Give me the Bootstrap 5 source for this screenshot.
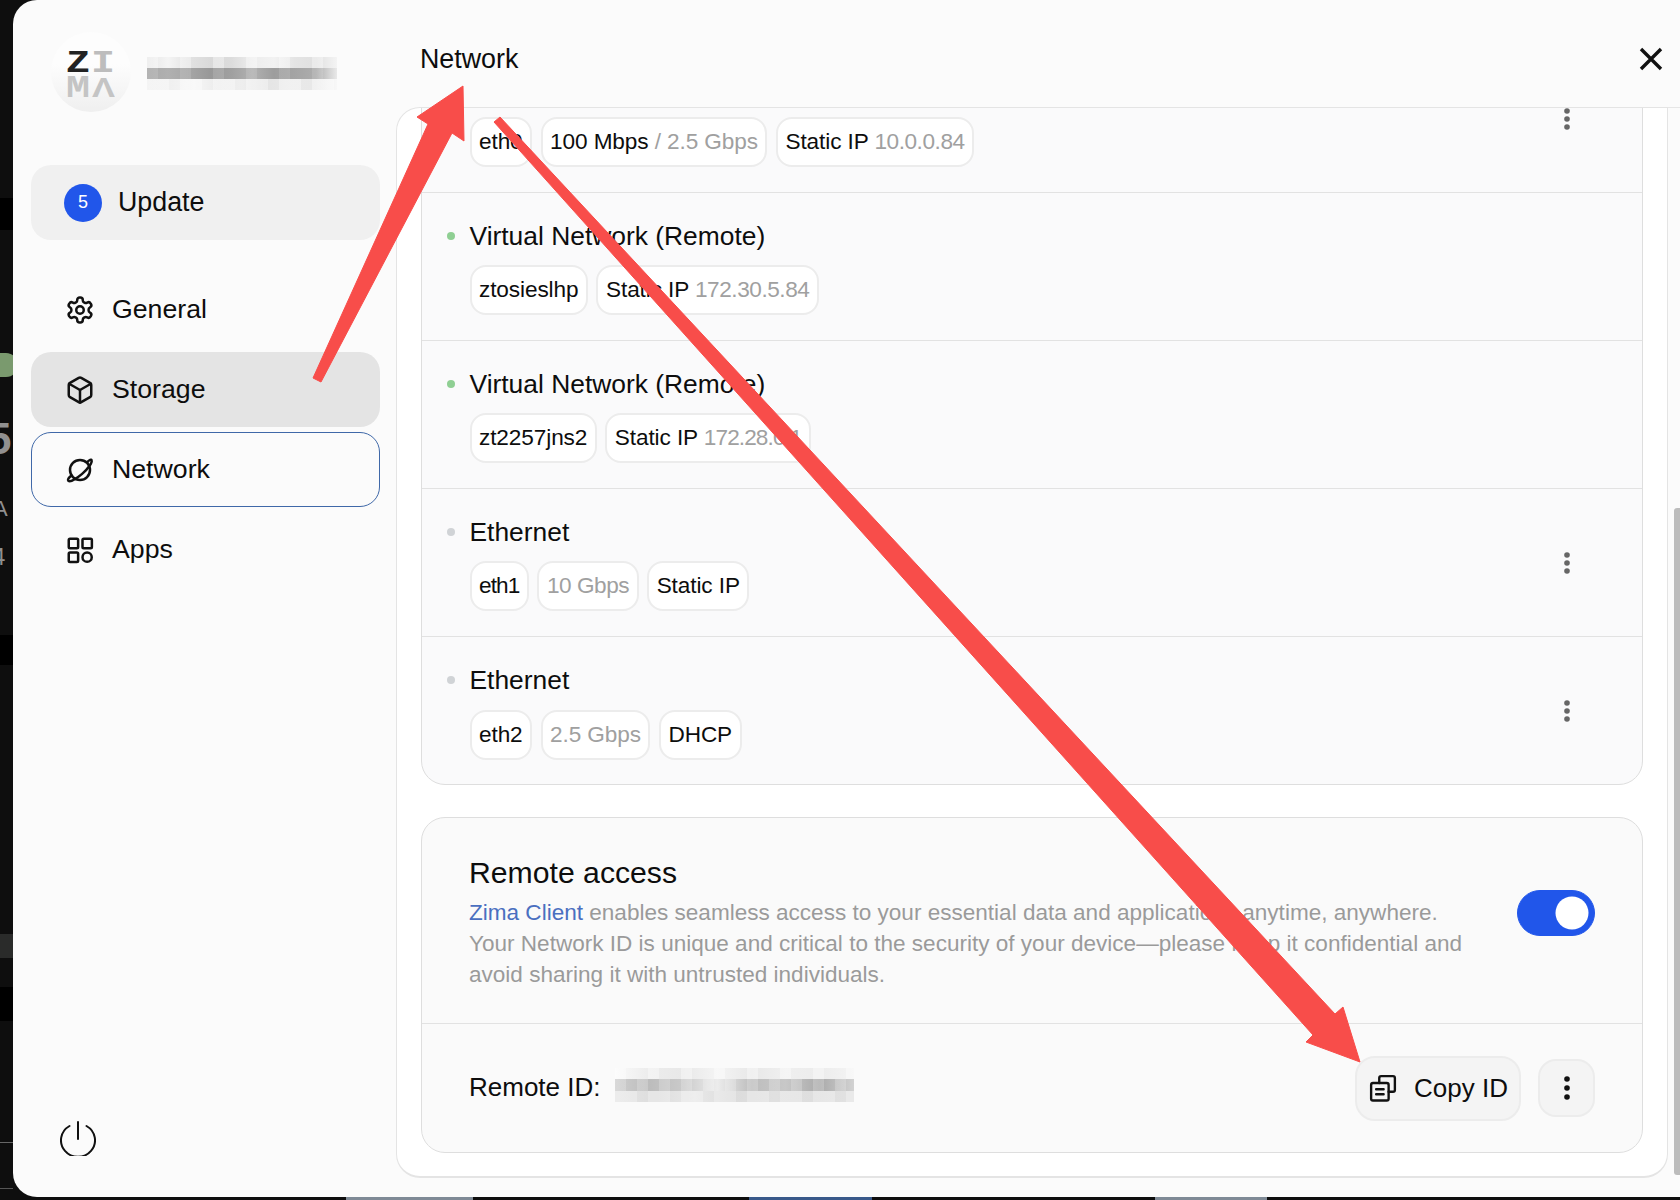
<!doctype html>
<html lang="en">
<head>
<meta charset="utf-8">
<title>Network</title>
<link href="https://cdn.jsdelivr.net/npm/bootstrap@5.3.0/dist/css/bootstrap.min.css" rel="stylesheet">
<style>
html,body{height:100%;margin:0;background:#0e0e0e;overflow:hidden}
body{font-family:"Liberation Sans",Arial,sans-serif;color:#0d0d0d}
.desk{position:relative;width:1680px;height:1200px;overflow:hidden}
.bg-item{position:absolute;display:block}
.band1{left:0;top:198px;width:13px;height:32px;background:#000}
.band2{left:0;top:635px;width:13px;height:30px;background:#000}
.band3{left:0;top:934px;width:13px;height:24px;background:#2a2b2a}
.band4{left:0;top:987px;width:13px;height:34px;background:#000}
.band5{left:0;top:1142px;width:13px;height:1px;background:#666}
.band6{left:0;top:1188px;width:13px;height:1px;background:#555}
.blob{left:-20px;top:353px;width:38px;height:24px;border-radius:12px;background:#7a9a6e}
.ghost{color:#909090;line-height:1;font-weight:700}
.g5{left:-13px;top:417px;font-size:44px}
.gA{left:-7px;top:498px;font-size:22px;font-weight:400}
.g4{left:-8px;top:545px;font-size:24px;font-weight:400}
.strip{top:1197px;height:3px;background:#7f8a96}
.s1{left:346px;width:127px}.s2{left:749px;width:123px;background:#39598a}.s3{left:1155px;width:112px}

.shell{position:relative;margin-left:13px;width:1667px;height:1197px;background:#fbfbfb;border-radius:24px 0 0 24px;overflow:hidden}
.side{width:383px;flex:none;padding:32px 16px 41px 18px}
.logo-disc{width:80px;height:80px;border-radius:50%;margin-left:20px;background:linear-gradient(180deg,#fdfdfd 40%,#efefef 100%)}
.fuzz{width:190px;margin-left:16px;margin-top:2px}
.fuzz i{display:block;height:11px}
.fuzz-a{background:repeating-linear-gradient(90deg,rgba(255,255,255,.35) 0 11px,transparent 11px 33px),linear-gradient(90deg,#e6e6e6,#f4f4f4,#e2e2e2,#d9d9d9,#dcdcdc,#ededed,#f2f2f2,#e4e4e4,#e0e0e0,#f4f4f4)}
.fuzz-b{background:repeating-linear-gradient(90deg,rgba(255,255,255,.12) 0 11px,transparent 11px 33px),linear-gradient(90deg,#a9a9a9,#b0b0b0,#a6a6a6,#989898,#a0a0a0,#b1b1b1,#9d9d9d,#a4a4a4,#adadad,#e9e9e9)}
.fuzz-c{background:repeating-linear-gradient(90deg,rgba(255,255,255,.35) 0 22px,transparent 22px 33px),linear-gradient(90deg,#eeeeee,#f0f0f0,#f6f6f6,#ebebeb,#eeeeee,#e4e4e4,#e9e9e9,#e8e8e8,#f8f8f8)}
.update-btn{height:75px;margin-top:53px;margin-bottom:32px;border-radius:20px;background:#f0f0f0;padding-left:33px;gap:16px;font-size:26.8px}
.count-dot{width:38px;height:38px;border-radius:50%;background:#2156ea;color:#fff;font-size:18px}
.nav-stack{gap:5px}
.nav-entry{height:75px;padding:0 0 0 33px;gap:17px;border-radius:20px;font-size:26.7px;color:#0d0d0d;border:1px solid transparent}
.nav-entry:hover,.nav-entry:focus{color:#0d0d0d}
.nav-entry.is-hover{background:#e4e4e4}
.nav-entry.is-focus{border:1.5px solid #3f68a8}
.power-btn{margin-left:29px;margin-top:auto;line-height:0}

.main-col{min-width:0}
.top-bar{height:107px;flex:none;padding:11px 17px 0 24px}
.page-title{font-size:26.8px;font-weight:400;margin:0}
.scroller{min-height:0;overflow:hidden;padding-bottom:19px;background:linear-gradient(#e6e6e6,#e6e6e6) right top/12px 1px no-repeat}
.panel{height:100%;margin-right:12px;background:#fff;border:solid #e4e4e4;border-width:1px 1px 2px 1px;border-radius:24px 0 24px 24px;padding:0 24px 24px;overflow:hidden}
.net-card{margin-top:-64px;margin-bottom:32px;background:#fafafb;border:1px solid #dedede;border-radius:24px;--bs-list-group-bg:transparent;--bs-list-group-border-color:#e2e2e2;--bs-border-radius:24px;--bs-list-group-border-radius:24px}
.net-row{height:148px;padding:23px 72px 0 24.5px;background:transparent;border-width:0 0 1px;border-style:solid;border-color:#e2e2e2;color:#0d0d0d}
.net-row:last-child{border-width:0;height:147px}
.net-name{font-size:26.4px;line-height:40px;gap:15px;margin-bottom:9px}
.net-row:last-child .net-name{margin-bottom:10px}
.kebab-soft{margin-top:-23px}
.dot-on,.dot-off{width:8px;height:8px;border-radius:50%;flex:none}
.dot-on{background:#8fcf93}.dot-off{background:#d0d3d6}
.chips{margin-left:23px;gap:8.5px}
.chip{height:50px;padding:0 7.5px;background:#fff;border:2px solid #ececec;border-radius:16px;font-size:22.6px;letter-spacing:-.1px;white-space:pre}
.soft{color:#a0a0a0}
.num{letter-spacing:-.45px}
.num-tight{letter-spacing:-.9px}
.access-card{background:#fafafa;border:1px solid #dedede;border-radius:24px;--bs-card-border-radius:24px;--bs-card-inner-border-radius:24px;color:#0d0d0d}
.access-top{height:206px;padding:35px 47px 0 47px;border-bottom:1px solid #e2e2e2}
.access-title{font-size:30.2px;line-height:40px;font-weight:400;margin:0 0 4px}
.access-text{font-size:22.55px;line-height:31px;color:#9a9a9a;margin:0;white-space:nowrap}
.access-text a{color:#4a6fc0;text-decoration:none}
.switch-big{margin:37px 0 0}
.switch-big .form-check-input{width:78px;height:46px;margin:0;background-color:#2156ea;border-color:#2156ea;float:none;display:block}
.access-bottom{height:128px;padding:0 47px;font-size:26px}
.id-label{margin-top:-2px}
.id-fuzz{width:239px;margin:-6px 0 0 14px}
.id-fuzz i{display:block;height:11.5px}
.idf-a{background:repeating-linear-gradient(90deg,rgba(255,255,255,.35) 0 11px,transparent 11px 33px),linear-gradient(90deg,#fafafa,#ececec,#e8e8e8,#f4f4f4,#e8e8e8,#efefef,#ececec,#f4f4f4)}
.idf-b{background:repeating-linear-gradient(90deg,rgba(255,255,255,.2) 0 11px,transparent 11px 22px),linear-gradient(90deg,#cfcfcf,#bcbcbc,#cacaca,#ececec,#bdbdbd,#c8c8c8,#aaaaaa,#d2d2d2)}
.idf-c{background:repeating-linear-gradient(90deg,rgba(255,255,255,.25) 0 22px,transparent 22px 33px),linear-gradient(90deg,#e6e6e6,#dddddd,#e8e8e8,#dcdcdc,#e0e0e0,#dedede,#e2e2e2)}
.copy-btn{height:65px;width:166px;padding:0 0 0 11px;gap:16px;font-size:26px;border-radius:20px;background:#f4f4f4;border:2px solid #ececec;color:#0d0d0d;justify-content:flex-start}
.more-btn{width:57px;height:58px;padding:0;border-radius:18px;background:#f4f4f4;border:2px solid #ececec;margin-left:17px}
.copy-btn:hover,.more-btn:hover{background:#f4f4f4;border-color:#ececec;color:#0d0d0d}
.thumb{position:absolute;right:0;top:508px;width:6px;height:667px;border-radius:3px 0 0 3px;background:#bcbcbc}
.arrows{position:absolute;left:0;top:0;pointer-events:none}
</style>
</head>
<body>
<div class="desk">
  <span class="bg-item band1"></span><span class="bg-item band2"></span><span class="bg-item band3"></span>
  <span class="bg-item band4"></span><span class="bg-item band5"></span><span class="bg-item band6"></span>
  <span class="bg-item blob"></span>
  <span class="bg-item ghost g5">5</span><span class="bg-item ghost gA">A</span><span class="bg-item ghost g4">4</span>
  <span class="bg-item strip s1"></span><span class="bg-item strip s2"></span><span class="bg-item strip s3"></span>

  <div class="shell d-flex">
    <aside class="side d-flex flex-column">
      <div class="d-flex align-items-center">
        <div class="logo-disc d-flex align-items-center justify-content-center flex-none">
          <svg width="48" height="52" viewBox="0 0 48 52" font-family="Liberation Mono, monospace" font-weight="700" font-size="31">
            <text x="-1" y="26" fill="#222" textLength="24" lengthAdjust="spacingAndGlyphs">Z</text>
            <text x="24" y="26" fill="#bdbdbd" textLength="24" lengthAdjust="spacingAndGlyphs">I</text>
            <text x="-1" y="51" fill="#c4c4c4" textLength="24" lengthAdjust="spacingAndGlyphs">M</text>
            <text x="25" y="51" fill="#c4c4c4" font-family="Liberation Sans, sans-serif" font-size="27" textLength="23" lengthAdjust="spacingAndGlyphs">Λ</text>
          </svg>
        </div>
        <div class="fuzz"><i class="fuzz-a"></i><i class="fuzz-b"></i><i class="fuzz-c"></i></div>
      </div>

      <div class="update-btn d-flex align-items-center"><span class="count-dot d-flex align-items-center justify-content-center">5</span>Update</div>

      <nav class="nav flex-column nav-stack">
        <a class="nav-link nav-entry d-flex align-items-center" href="#">
          <svg width="30" height="30" viewBox="0 0 24 24" fill="none" stroke="#111" stroke-width="2" stroke-linecap="round" stroke-linejoin="round"><path d="M12.22 2h-.44a2 2 0 0 0-2 2v.18a2 2 0 0 1-1 1.73l-.43.25a2 2 0 0 1-2 0l-.15-.08a2 2 0 0 0-2.73.73l-.22.38a2 2 0 0 0 .73 2.73l.15.1a2 2 0 0 1 1 1.72v.51a2 2 0 0 1-1 1.74l-.15.09a2 2 0 0 0-.73 2.73l.22.38a2 2 0 0 0 2.73.73l.15-.08a2 2 0 0 1 2 0l.43.25a2 2 0 0 1 1 1.73V20a2 2 0 0 0 2 2h.44a2 2 0 0 0 2-2v-.18a2 2 0 0 1 1-1.73l.43-.25a2 2 0 0 1 2 0l.15.08a2 2 0 0 0 2.73-.73l.22-.39a2 2 0 0 0-.73-2.73l-.15-.08a2 2 0 0 1-1-1.74v-.5a2 2 0 0 1 1-1.74l.15-.09a2 2 0 0 0 .73-2.73l-.22-.38a2 2 0 0 0-2.73-.73l-.15.08a2 2 0 0 1-2 0l-.43-.25a2 2 0 0 1-1-1.73V4a2 2 0 0 0-2-2z"/><circle cx="12" cy="12" r="3"/></svg>
          General</a>
        <a class="nav-link nav-entry is-hover d-flex align-items-center" href="#">
          <svg width="30" height="30" viewBox="0 0 24 24" fill="none" stroke="#111" stroke-width="2" stroke-linecap="round" stroke-linejoin="round"><path d="M21 8a2 2 0 0 0-1-1.73l-7-4a2 2 0 0 0-2 0l-7 4A2 2 0 0 0 3 8v8a2 2 0 0 0 1 1.73l7 4a2 2 0 0 0 2 0l7-4A2 2 0 0 0 21 16Z"/><path d="m3.3 7 8.7 5 8.7-5"/><path d="M12 22V12"/></svg>
          Storage</a>
        <a class="nav-link nav-entry is-focus d-flex align-items-center" href="#">
          <svg width="30" height="30" viewBox="0 0 24 24" fill="none" stroke="#111" stroke-width="2" stroke-linecap="round" stroke-linejoin="round"><circle cx="12" cy="12" r="8"/><path d="M18 5.5c1.500-1.800 3-2.200 3.300-1.200.6 1.700-2.800 6.700-7.600 10.800-4.700 4-9.700 6.700-11 5.500-.8-.8.2-2.300 2-3.800"/></svg>
          Network</a>
        <a class="nav-link nav-entry d-flex align-items-center" href="#">
          <svg width="30" height="30" viewBox="0 0 24 24" fill="none" stroke="#111" stroke-width="2" stroke-linejoin="round"><rect x="3" y="3" width="7.500" height="7.500" rx="1"/><rect x="14" y="3" width="7.500" height="7.500" rx="1"/><rect x="3" y="14" width="7.500" height="7.500" rx="1"/><circle cx="17.700" cy="17.700" r="3.700"/></svg>
          Apps</a>
      </nav>

      <div class="power-btn">
        <svg width="36" height="36" viewBox="0 0 36 36" fill="none" stroke="#111" stroke-width="2" stroke-linecap="round"><path d="M18 2v17"/><path d="M9.500 6A17 16.500 0 1 0 26.500 6"/></svg>
      </div>
    </aside>

    <div class="main-col flex-grow-1 d-flex flex-column">
      <header class="top-bar d-flex align-items-center justify-content-between">
        <h1 class="page-title">Network</h1>
        <svg width="24" height="24" viewBox="0 0 24 24" fill="none" stroke="#111" stroke-width="3.400"><path d="M2 2l20 20M22 2L2 22"/></svg>
      </header>
      <div class="scroller flex-grow-1">
        <div class="panel">
          <div class="list-group net-card">
            <div class="list-group-item net-row d-flex justify-content-between">
              <div>
                <div class="net-name d-flex align-items-center"><span class="dot-on"></span>Ethernet</div>
                <div class="chips d-flex">
                  <span class="chip d-flex align-items-center">eth0</span>
                  <span class="chip d-flex align-items-center">100 Mbps<span class="soft"> / 2.5 Gbps</span></span>
                  <span class="chip d-flex align-items-center">Static IP <span class="soft num">10.0.0.84</span></span>
                </div>
              </div>
              <svg class="align-self-center kebab-soft" width="6" height="22" viewBox="0 0 6 22" fill="#666"><circle cx="3" cy="3" r="2.800"/><circle cx="3" cy="11" r="2.800"/><circle cx="3" cy="19" r="2.800"/></svg>
            </div>
            <div class="list-group-item net-row">
              <div class="net-name d-flex align-items-center"><span class="dot-on"></span>Virtual Network (Remote)</div>
              <div class="chips d-flex">
                <span class="chip d-flex align-items-center">ztosieslhp</span>
                <span class="chip d-flex align-items-center">Static IP <span class="soft num">172.30.5.84</span></span>
              </div>
            </div>
            <div class="list-group-item net-row">
              <div class="net-name d-flex align-items-center"><span class="dot-on"></span>Virtual Network (Remote)</div>
              <div class="chips d-flex">
                <span class="chip d-flex align-items-center">zt2257jns2</span>
                <span class="chip d-flex align-items-center">Static IP <span class="soft num-tight">172.28.0.1</span></span>
              </div>
            </div>
            <div class="list-group-item net-row d-flex justify-content-between">
              <div>
                <div class="net-name d-flex align-items-center"><span class="dot-off"></span>Ethernet</div>
                <div class="chips d-flex">
                  <span class="chip num-tight d-flex align-items-center">eth1</span>
                  <span class="chip soft num d-flex align-items-center">10 Gbps</span>
                  <span class="chip d-flex align-items-center">Static IP</span>
                </div>
              </div>
              <svg class="align-self-center kebab-soft" width="6" height="22" viewBox="0 0 6 22" fill="#666"><circle cx="3" cy="3" r="2.800"/><circle cx="3" cy="11" r="2.800"/><circle cx="3" cy="19" r="2.800"/></svg>
            </div>
            <div class="list-group-item net-row d-flex justify-content-between">
              <div>
                <div class="net-name d-flex align-items-center"><span class="dot-off"></span>Ethernet</div>
                <div class="chips d-flex">
                  <span class="chip d-flex align-items-center">eth2</span>
                  <span class="chip soft d-flex align-items-center">2.5 Gbps</span>
                  <span class="chip d-flex align-items-center">DHCP</span>
                </div>
              </div>
              <svg class="align-self-center kebab-soft" width="6" height="22" viewBox="0 0 6 22" fill="#666"><circle cx="3" cy="3" r="2.800"/><circle cx="3" cy="11" r="2.800"/><circle cx="3" cy="19" r="2.800"/></svg>
            </div>
          </div>

          <div class="card access-card">
            <div class="access-top d-flex justify-content-between align-items-start">
              <div>
                <h2 class="access-title">Remote access</h2>
                <p class="access-text"><a href="#">Zima Client</a> enables seamless access to your essential data and applications anytime, anywhere.<br>Your Network ID is unique and critical to the security of your device—please keep it confidential and<br>avoid sharing it with untrusted individuals.</p>
              </div>
              <div class="form-check form-switch switch-big p-0">
                <input class="form-check-input" type="checkbox" role="switch" aria-label="Remote access" checked>
              </div>
            </div>
            <div class="access-bottom d-flex align-items-center">
              <span class="id-label">Remote ID:</span>
              <div class="id-fuzz"><i class="idf-a"></i><i class="idf-b"></i><i class="idf-c"></i></div>
              <button type="button" class="btn copy-btn d-flex align-items-center ms-auto">
                <svg width="30" height="30" viewBox="0 0 24 24" fill="none" stroke="#111" stroke-width="1.900" stroke-linejoin="round" stroke-linecap="round"><path d="M9 8V4a1.500 1.500 0 0 1 1.500-1.500H20A1.500 1.500 0 0 1 21.500 4v9.500A1.500 1.500 0 0 1 20 15h-3.500"/><rect x="2.500" y="8" width="14" height="14" rx="1.500"/><path d="M6.500 13h6M6.500 17h6"/></svg>
                Copy ID</button>
              <button type="button" class="btn more-btn d-flex align-items-center justify-content-center" aria-label="More">
                <svg width="8" height="26" viewBox="0 0 8 26" fill="#111"><circle cx="4" cy="4" r="2.800"/><circle cx="4" cy="13" r="2.800"/><circle cx="4" cy="22" r="2.800"/></svg>
              </button>
            </div>
          </div>
        </div>
      </div>
    </div>
    <div class="thumb"></div>
  </div>

  <svg class="arrows" width="1680" height="1200" viewBox="0 0 1680 1200" fill="#f84d4a" stroke="#f84d4a" stroke-width="1" stroke-linejoin="round">
    <polygon points="463,86 464,141 452,133 321,382 313,378 428,124 417,117"/>
    <polygon points="500,117 1335,1014 1343,1007 1360,1062 1306,1042 1313,1035 494,122"/>
  </svg>
</div>
<script src="https://cdn.jsdelivr.net/npm/bootstrap@5.3.0/dist/js/bootstrap.bundle.min.js"></script>
</body>
</html>
